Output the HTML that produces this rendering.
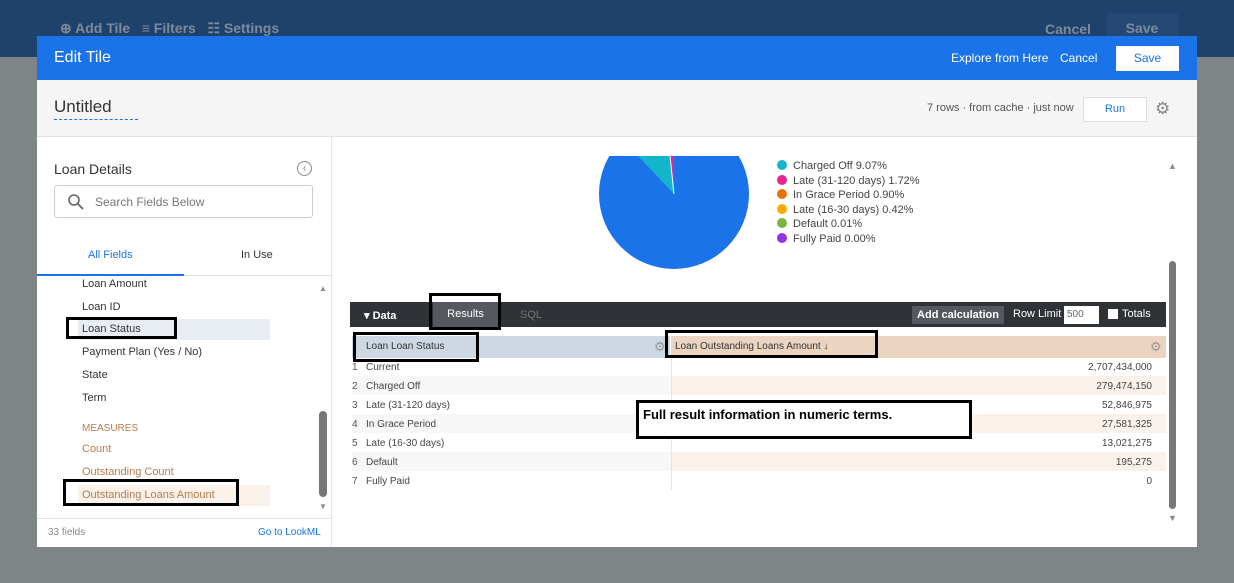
<!DOCTYPE html>
<html><head><style>
*{margin:0;padding:0;box-sizing:border-box}
body{width:1234px;height:583px;overflow:hidden;background:#7f8487;font-family:"Liberation Sans",sans-serif;position:relative}
.a{position:absolute;white-space:nowrap}
.box{position:absolute;border:3px solid #000}
.d{display:inline-block;width:10px;height:10px;border-radius:50%;margin-right:6px;vertical-align:-1px}
</style></head><body>
<div class="a" style="left:0;top:0;width:1234px;height:57px;background:#1f426d"></div>
<div class="a" style="left:60px;top:20px;color:#7d8a9c;font-size:14px;font-weight:bold">⊕ Add Tile &nbsp;&nbsp;≡ Filters &nbsp;&nbsp;☷ Settings</div>
<div class="a" style="left:1045px;top:21px;color:#7d8a9c;font-size:14px;font-weight:bold">Cancel</div>
<div class="a" style="left:1106px;top:13px;width:72px;height:30px;background:#244873;color:#7d8a9c;font-size:14px;font-weight:bold;text-align:center;line-height:30px">Save</div>

<div class="a" style="left:37px;top:36px;width:1160px;height:511px;background:#fff"></div>
<div class="a" style="left:37px;top:36px;width:1160px;height:44px;background:#1a73e8"></div>
<div class="a" style="left:54px;top:49px;color:#fff;font-size:16px">Edit Tile</div>
<div class="a" style="left:951px;top:51px;color:#fff;font-size:12px">Explore from Here</div>
<div class="a" style="left:1060px;top:51px;color:#fff;font-size:12px">Cancel</div>
<div class="a" style="left:1116px;top:46px;width:63px;height:25px;background:#fff;color:#1a73e8;font-size:12px;text-align:center;line-height:25px">Save</div>

<div class="a" style="left:37px;top:80px;width:1160px;height:57px;background:#f5f5f5;border-bottom:1px solid #e2e2e2"></div>
<div class="a" style="left:54px;top:97px;color:#333;font-size:17px;border-bottom:1px dashed #1a73e8;padding-bottom:2px;width:84px">Untitled</div>
<div class="a" style="left:927px;top:102px;color:#555;font-size:11px">7 rows · from cache · just now</div>
<div class="a" style="left:1083px;top:97px;width:64px;height:25px;background:#fff;border:1px solid #ddd;color:#1a73e8;font-size:11px;text-align:center;line-height:23px">Run</div>
<div class="a" style="left:1155px;top:99px;color:#888;font-size:17px">⚙</div>

<div class="a" style="left:331px;top:137px;width:1px;height:410px;background:#e5e5e5"></div>
<div class="a" style="left:54px;top:161px;color:#333;font-size:14px">Loan Details</div>
<div class="a" style="left:297px;top:161px;width:15px;height:15px;border:1px solid #888;border-radius:50%;color:#777;font-size:10px;text-align:center;line-height:13px">‹</div>
<div class="a" style="left:54px;top:185px;width:259px;height:33px;border:1px solid #ccc;border-radius:3px"></div>
<svg class="a" style="left:67px;top:193px" width="18" height="18"><circle cx="7" cy="7" r="5" fill="none" stroke="#666" stroke-width="1.6"/><line x1="11" y1="11" x2="16" y2="16" stroke="#666" stroke-width="1.8"/></svg>
<div class="a" style="left:95px;top:195px;color:#777;font-size:12px">Search Fields Below</div>
<div class="a" style="left:88px;top:249px;color:#1a73e8;font-size:11px">All Fields</div>
<div class="a" style="left:241px;top:249px;color:#333;font-size:11px">In Use</div>
<div class="a" style="left:37px;top:275px;width:294px;height:1px;background:#e2e2e2"></div>
<div class="a" style="left:37px;top:274px;width:147px;height:2px;background:#1a73e8"></div>
<div class="a" style="left:78px;top:319px;width:192px;height:21px;background:#e8edf3"></div>
<div class="a" style="left:78px;top:485px;width:192px;height:21px;background:#fbf2ea"></div>
<div class="a" style="left:82px;top:273px;color:#333;font-size:11px;line-height:22.7px">Loan Amount<br>Loan ID<br>Loan Status<br>Payment Plan (Yes / No)<br>State<br>Term</div>
<div class="a" style="left:82px;top:423px;color:#b47b4e;font-size:10px">MEASURES</div>
<div class="a" style="left:82px;top:438px;color:#b47b4e;font-size:11px;line-height:22.8px">Count<br>Outstanding Count<br>Outstanding Loans Amount</div>
<div class="a" style="left:319px;top:284px;color:#888;font-size:8px">▲</div>
<div class="a" style="left:319px;top:502px;color:#888;font-size:8px">▼</div>
<div class="a" style="left:319px;top:411px;width:8px;height:86px;background:#777;border-radius:4px"></div>
<div class="a" style="left:37px;top:518px;width:294px;height:1px;background:#e2e2e2"></div>
<div class="a" style="left:48px;top:527px;color:#888;font-size:10px">33 fields</div>
<div class="a" style="left:258px;top:527px;color:#1a73e8;font-size:10px">Go to LookML</div>
<div class="box" style="left:66px;top:317px;width:111px;height:22px"></div>
<div class="box" style="left:63px;top:479px;width:176px;height:27px"></div>

<svg class="a" style="left:590px;top:156px" width="170" height="120"><circle cx="84" cy="38" r="75" fill="#1a73e8"/><path d="M84 38 L48 0 L80 0 Z" fill="#12b5cb"/><path d="M84 38 L80 0 L84 0Z" fill="#e52592"/><path d="M84 38 L80 0" stroke="#fff" stroke-width="1"/></svg>
<div class="a" style="left:777px;top:159px;font-size:11px;color:#444;line-height:14.6px">
<span class="d" style="background:#12b5cb"></span>Charged Off 9.07%<br><span class="d" style="background:#e52592"></span>Late (31-120 days) 1.72%<br><span class="d" style="background:#e8710a"></span>In Grace Period 0.90%<br><span class="d" style="background:#f9ab00"></span>Late (16-30 days) 0.42%<br><span class="d" style="background:#7cb342"></span>Default 0.01%<br><span class="d" style="background:#9334e6"></span>Fully Paid 0.00%</div>
<div class="a" style="left:1168px;top:161px;color:#888;font-size:9px">▲</div>
<div class="a" style="left:1168px;top:513px;color:#888;font-size:9px">▼</div>
<div class="a" style="left:1169px;top:261px;width:7px;height:248px;background:#777;border-radius:4px"></div>

<div class="a" style="left:350px;top:302px;width:816px;height:25px;background:#2f3237"></div>
<div class="a" style="left:364px;top:309px;color:#fff;font-size:11px;font-weight:bold">▾ Data</div>
<div class="a" style="left:433px;top:302px;width:65px;height:25px;background:#55595f;color:#fff;font-size:11px;text-align:center;line-height:25px">Results</div>
<div class="a" style="left:520px;top:309px;color:#777;font-size:11px">SQL</div>
<div class="a" style="left:912px;top:306px;width:92px;height:18px;background:#55595f;color:#fff;font-size:11px;font-weight:bold;text-align:center;line-height:18px">Add calculation</div>
<div class="a" style="left:1013px;top:308px;color:#fff;font-size:11px">Row Limit</div>
<div class="a" style="left:1064px;top:306px;width:35px;height:18px;background:#fff;color:#666;font-size:10px;padding:3px">500</div>
<div class="a" style="left:1108px;top:309px;width:10px;height:10px;background:#fff"></div>
<div class="a" style="left:1122px;top:308px;color:#fff;font-size:11px">Totals</div>
<div class="box" style="left:429px;top:293px;width:72px;height:37px"></div>

<div class="a" style="left:352px;top:336px;width:318px;height:22px;background:#ced8e2"></div>
<div class="a" style="left:671px;top:336px;width:495px;height:22px;background:#ebd5c1"></div>
<div class="a" style="left:366px;top:341px;color:#333;font-size:10px">Loan Loan Status</div>
<div class="a" style="left:675px;top:341px;color:#333;font-size:10px">Loan Outstanding Loans Amount ↓</div>
<div class="a" style="left:654px;top:339px;color:#999;font-size:13px">⚙</div>
<div class="a" style="left:1150px;top:339px;color:#999;font-size:13px">⚙</div>
<div class="a" style="left:352px;top:376px;width:814px;height:19px;background:#f7f7f7"></div>
<div class="a" style="left:671px;top:376px;width:495px;height:19px;background:#faf1ea"></div>
<div class="a" style="left:352px;top:414px;width:814px;height:19px;background:#f7f7f7"></div>
<div class="a" style="left:671px;top:414px;width:495px;height:19px;background:#faf1ea"></div>
<div class="a" style="left:352px;top:452px;width:814px;height:19px;background:#f7f7f7"></div>
<div class="a" style="left:671px;top:452px;width:495px;height:19px;background:#faf1ea"></div>
<div class="a" style="left:671px;top:358px;width:1px;height:132px;background:#e5e5e5"></div>
<div class="a" style="left:352px;top:358px;color:#555;font-size:10px;line-height:19px">1<br>2<br>3<br>4<br>5<br>6<br>7</div>
<div class="a" style="left:366px;top:358px;color:#444;font-size:10px;line-height:19px">Current<br>Charged Off<br>Late (31-120 days)<br>In Grace Period<br>Late (16-30 days)<br>Default<br>Fully Paid</div>
<div class="a" style="left:1000px;top:358px;width:152px;text-align:right;color:#444;font-size:10px;line-height:19px">2,707,434,000<br>279,474,150<br>52,846,975<br>27,581,325<br>13,021,275<br>195,275<br>0</div>
<div class="box" style="left:353px;top:332px;width:126px;height:30px"></div>
<div class="box" style="left:665px;top:330px;width:213px;height:28px"></div>
<div class="box" style="left:636px;top:400px;width:336px;height:39px;background:#fff"></div>
<div class="a" style="left:643px;top:407px;color:#000;font-size:13px;font-weight:bold">Full result information in numeric terms.</div>
</body></html>
